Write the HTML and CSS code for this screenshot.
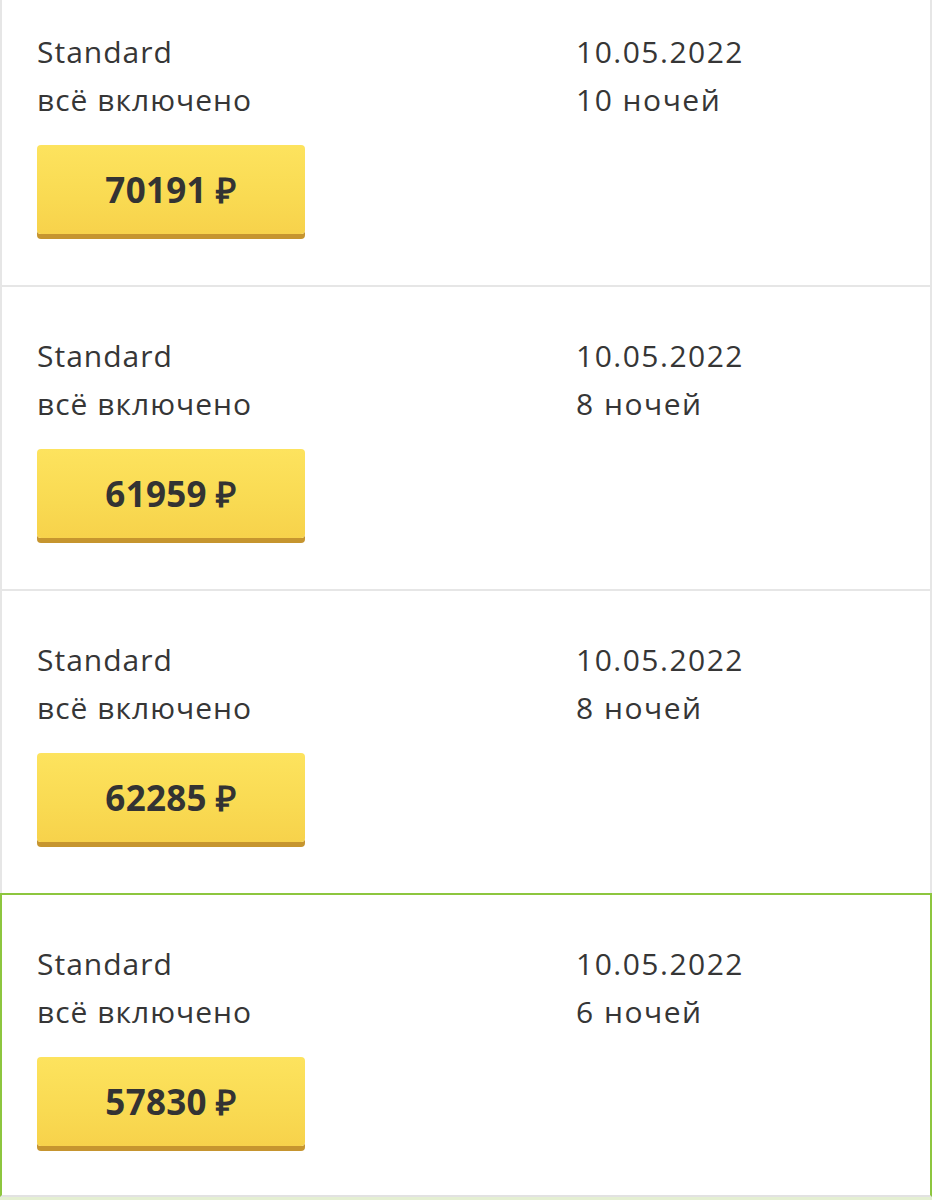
FILE: index.html
```html
<!DOCTYPE html>
<html lang="ru">
<head>
<meta charset="utf-8">
<link rel="stylesheet" href="styles.css">
</head>
<body>
<div class="list">
  <div class="card">
    <div class="info">
      <div class="col-main">
        <div class="line">Standard</div>
        <div class="line">всё включено</div>
      </div>
      <div class="col-date">
        <div class="line">10.05.2022</div>
        <div class="line">10 ночей</div>
      </div>
    </div>
    <button class="price">70191 ₽</button>
  </div>
  <div class="card">
    <div class="info">
      <div class="col-main">
        <div class="line">Standard</div>
        <div class="line">всё включено</div>
      </div>
      <div class="col-date">
        <div class="line">10.05.2022</div>
        <div class="line">8 ночей</div>
      </div>
    </div>
    <button class="price">61959 ₽</button>
  </div>
  <div class="card">
    <div class="info">
      <div class="col-main">
        <div class="line">Standard</div>
        <div class="line">всё включено</div>
      </div>
      <div class="col-date">
        <div class="line">10.05.2022</div>
        <div class="line">8 ночей</div>
      </div>
    </div>
    <button class="price">62285 ₽</button>
  </div>
  <div class="card card-active">
    <div class="info">
      <div class="col-main">
        <div class="line">Standard</div>
        <div class="line">всё включено</div>
      </div>
      <div class="col-date">
        <div class="line">10.05.2022</div>
        <div class="line">6 ночей</div>
      </div>
    </div>
    <button class="price">57830 ₽</button>
  </div>
  <div class="tail"></div>
</div>
</body>
</html>
```

FILE: styles.css
```css
html, body {
  margin: 0;
  padding: 0;
  background: #ffffff;
}
body {
  font-family: "Open Sans", "Liberation Sans", sans-serif;
  color: #333333;
  overflow: hidden;
}
.list {
  margin-top: -19px;
  display: flex;
  flex-direction: column;
}
.card {
  box-sizing: border-box;
  height: 304px;
  border-left: 2px solid #e6e6e6;
  border-right: 2px solid #e6e6e6;
  border-top: 2px solid #e6e6e6;
  padding: 45px 0 0 35px;
  display: flex;
  flex-direction: column;
  align-items: flex-start;
}
.card-active {
  border-color: #8dc63f;
  border-bottom: 2px solid #e2e2e2;
  height: 304px;
}
.info {
  display: grid;
  grid-template-columns: 539px 1fr;
  width: 100%;
}
.line {
  font-size: 30px;
  letter-spacing: 1px;
  line-height: 48px;
  height: 48px;
  white-space: nowrap;
  color: #363636;
}
.col-date .line {
  letter-spacing: 1.5px;
}
.price {
  margin-top: 21px;
  width: 268px;
  height: 89px;
  border: none;
  border-radius: 4px;
  background: linear-gradient(to bottom, #fde35e 0%, #f9da52 60%, #f7d24b 100%);
  box-shadow: 0 5px 0 #c6952f;
  font-family: "Open Sans", "Liberation Sans", sans-serif;
  font-weight: 700;
  font-size: 35px;
  letter-spacing: 0.3px;
  color: #333333;
  padding: 0;
  cursor: pointer;
}
.tail {
  height: 4px;
  background: #e4efd2;
}
```
